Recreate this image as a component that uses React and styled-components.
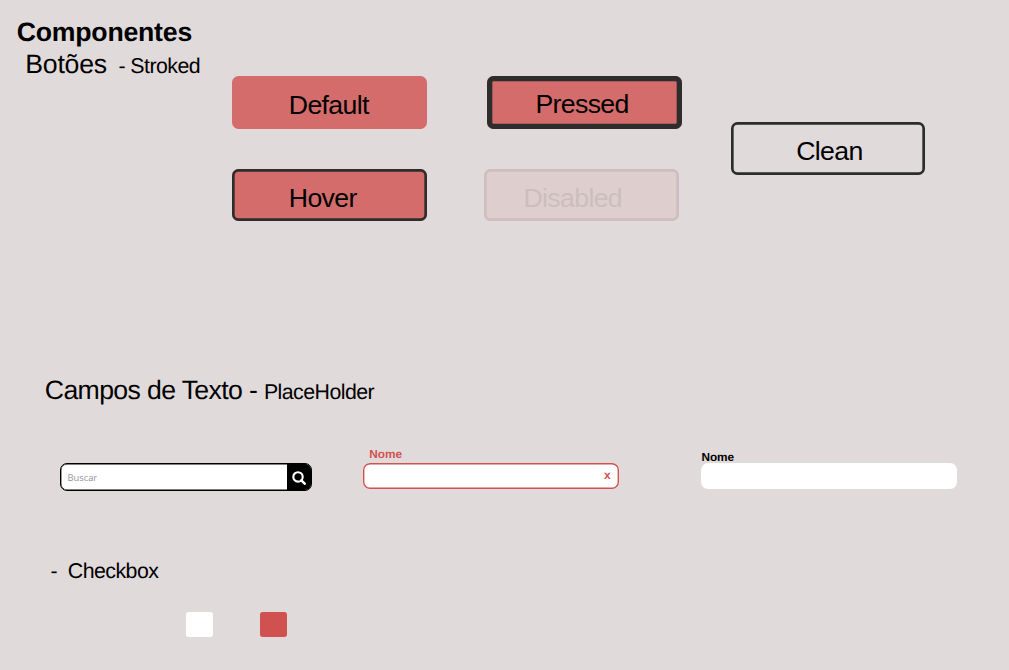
import React from "react";
import styled, { createGlobalStyle } from "styled-components";

const GlobalStyle = createGlobalStyle`
  * { box-sizing: border-box; }
  body {
    margin: 0;
    background: #e0dada;
    color: #000;
    font-family: "Liberation Sans", Arial, sans-serif;
  }
`;

const Page = styled.main`
  width: 1009px;
  height: 670px;
  overflow: hidden;
  background: #e0dada;
  display: flex;
  flex-direction: column;
  text-rendering: geometricPrecision;
`;

const ButtonsSection = styled.section`
  display: flex;
  align-items: flex-start;
  height: 375px;
  padding-top: 17px;
`;

const Headings = styled.header`
  width: 232px;
  flex: none;
  padding-left: 16.7px;
`;

const Title = styled.h1`
  margin: 0;
  font-size: 26.67px;
  line-height: 30px;
  font-weight: 700;
  letter-spacing: -0.22px;
`;

const Subtitle = styled.h2`
  margin: ${(p) => p.$margin || "0"};
  font-size: 26.67px;
  line-height: 30px;
  font-weight: 400;
  letter-spacing: ${(p) => p.$tracking || "-0.53px"};
  white-space: pre;
`;

const Variant = styled.span`
  font-size: 21.33px;
  letter-spacing: ${(p) => p.$tracking || "inherit"};
  margin-left: ${(p) => p.$gap || "0"};
`;

const ButtonColumn = styled.div`
  display: flex;
  flex-direction: column;
  gap: 40.3px;
  margin: ${(p) => p.$margin};
`;

const variants = {
  default: { bg: "#d46c6b", line: "#d46c6b", width: 0, color: "#000" },
  hover: { bg: "#d46c6b", line: "#2d2d2d", width: 2.67, color: "#000" },
  pressed: { bg: "#d46c6b", line: "#2d2d2d", width: 5.33, color: "#000" },
  disabled: { bg: "#decfce", line: "#cdbfbf", width: 2.67, color: "#cbbebe" },
  clean: { bg: "transparent", line: "#2a2d2b", width: 2.67, color: "#000" },
};

const Button = styled.button`
  display: flex;
  align-items: flex-start;
  width: 194.7px;
  height: 52.5px;
  margin: 0 0 0 ${(p) => p.$shift || 0}px;
  padding: ${(p) => p.$top || 14}px 0 0 ${(p) => p.$indent}px;
  border: 0;
  border-radius: 6.5px;
  background: ${(p) => variants[p.$variant].bg};
  box-shadow: inset 0 0 0 ${(p) => variants[p.$variant].width}px
    ${(p) => variants[p.$variant].line};
  color: ${(p) => variants[p.$variant].color};
  font: 400 26.67px/30px "Liberation Sans", Arial, sans-serif;
  letter-spacing: -0.65px;
  text-align: left;
`;

const FieldsSection = styled.section`
  height: 181px;
`;

const FieldRow = styled.div`
  display: flex;
  align-items: flex-start;
  margin-top: 39.4px;
  padding-left: 59.5px;
`;

const SearchBox = styled.div`
  display: flex;
  width: 252.6px;
  height: 28px;
  margin-top: 17px;
  border: 1px solid #000;
  border-radius: 7px;
  background: #fff;
  box-shadow: inset 0 0 0 0.4px #000;
  overflow: hidden;
`;

const SearchInput = styled.div`
  flex: 1;
  padding: 6px 0 0 7px;
  font: 400 9.33px/16px "Open Sans", sans-serif;
  color: #94949c;
`;

const SearchButton = styled.div`
  width: 24.6px;
  padding-top: 1px;
  background: #000;
  display: flex;
  align-items: center;
  justify-content: center;
`;

const Field = styled.div`
  width: 255.3px;
  margin-left: ${(p) => p.$gap}px;
  padding-top: ${(p) => p.$top || 0}px;
`;

const FieldLabel = styled.label`
  display: block;
  padding-left: ${(p) => p.$indent || 0}px;
  font-size: 11.8px;
  line-height: 14px;
  font-weight: 700;
  color: ${(p) => (p.$error ? "#d15150" : "#000")};
`;

const FieldInput = styled.div`
  height: 25.6px;
  margin-top: ${(p) => p.$offset}px;
  border-radius: 7px;
  background: #fff;
  box-shadow: inset 0 0 0 ${(p) => (p.$error ? "1.4px #d15150" : "0 #fff")};
  display: flex;
  justify-content: flex-end;
`;

const ClearMark = styled.span`
  padding: 5px 8px 0 0;
  font-size: 12px;
  line-height: 14px;
  font-weight: 700;
  color: #d15150;
`;

const CheckboxRow = styled.div`
  display: flex;
  gap: 47.2px;
  margin: 26px 0 0 186.2px;
`;

const Checkbox = styled.div`
  width: 26.7px;
  height: 24.6px;
  border-radius: 2.7px;
  background: ${(p) => (p.$checked ? "#d05150" : "#fff")};
`;

export default function App() {
  return (
    <Page>
      <GlobalStyle />
      <ButtonsSection>
        <Headings>
          <Title>Componentes</Title>
          <Subtitle $margin="2px 0 0 8.5px" $tracking="-0.2px">
            Botões<Variant $gap="11.4px" $tracking="-0.53px">- Stroked</Variant>
          </Subtitle>
        </Headings>
        <ButtonColumn $margin="59px 0 0 0">
          <Button $variant="default" $indent={56.8}>Default</Button>
          <Button $variant="hover" $indent={56.8}>Hover</Button>
        </ButtonColumn>
        <ButtonColumn $margin="59px 0 0 57.3px">
          <Button $variant="pressed" $indent={48.2} $top={13.4} $shift={3.3}>Pressed</Button>
          <Button $variant="disabled" $indent={39.5}>Disabled</Button>
        </ButtonColumn>
        <ButtonColumn $margin="105.3px 0 0 48.6px">
          <Button $variant="clean" $indent={65.6}>Clean</Button>
        </ButtonColumn>
      </ButtonsSection>

      <FieldsSection>
        <Subtitle $margin="0 0 0 44.8px" $tracking="-0.64px">
          Campos de Texto - <Variant $tracking="-0.55px">PlaceHolder</Variant>
        </Subtitle>
        <FieldRow>
          <SearchBox>
            <SearchInput>Buscar</SearchInput>
            <SearchButton>
              <svg width="14" height="14" viewBox="0 0 14 14" fill="none" stroke="#fff">
                <circle cx="6" cy="5.9" r="4.7" strokeWidth="2.1" />
                <path d="M9.3 9.3L12.7 12.7" strokeWidth="2.5" strokeLinecap="round" />
              </svg>
            </SearchButton>
          </SearchBox>
          <Field $gap={51.3} $top={1}>
            <FieldLabel $error $indent={5.8}>Nome</FieldLabel>
            <FieldInput $error $offset={2}>
              <ClearMark>x</ClearMark>
            </FieldInput>
          </Field>
          <Field $gap={82.7} $top={4}>
            <FieldLabel>Nome</FieldLabel>
            <FieldInput $offset={-1} />
          </Field>
        </FieldRow>
      </FieldsSection>

      <section>
        <Subtitle $margin="-2px 0 0 50.4px">
          <Variant>-  Checkbox</Variant>
        </Subtitle>
        <CheckboxRow>
          <Checkbox />
          <Checkbox $checked />
        </CheckboxRow>
      </section>
    </Page>
  );
}
